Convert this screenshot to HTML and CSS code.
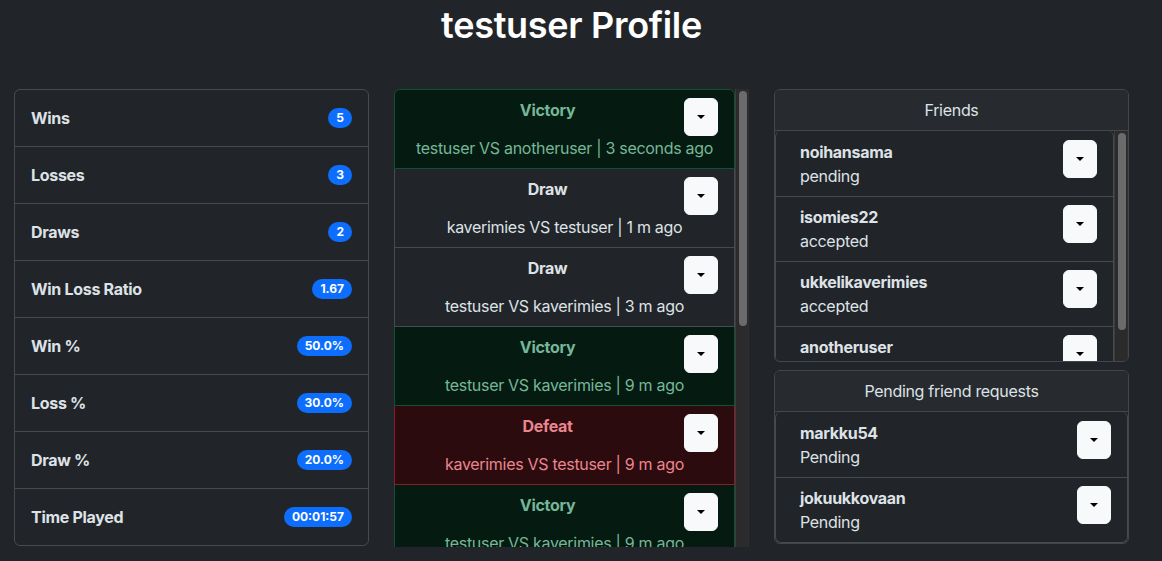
FILE: index.html
```html
<!DOCTYPE html>
<html lang="en">
<head>
<meta charset="utf-8">
<title>testuser Profile</title>
<link rel="stylesheet" href="styles.css">
</head>
<body>
<div class="page">
  <h1 class="title">testuser Profile</h1>
  <div class="columns">
    <ul class="stats">
      <li class="stat"><span>Wins</span><span class="badge">5</span></li>
      <li class="stat"><span>Losses</span><span class="badge">3</span></li>
      <li class="stat"><span>Draws</span><span class="badge">2</span></li>
      <li class="stat"><span>Win Loss Ratio</span><span class="badge">1.67</span></li>
      <li class="stat"><span>Win %</span><span class="badge">50.0%</span></li>
      <li class="stat"><span>Loss %</span><span class="badge">30.0%</span></li>
      <li class="stat"><span>Draw %</span><span class="badge">20.0%</span></li>
      <li class="stat"><span>Time Played</span><span class="badge">00:01:57</span></li>
    </ul>

    <div class="games">
      <div class="games-viewport">
        <ul class="game-list">
          <li class="game game-win"><div class="game-head"><div class="game-result">Victory</div><button class="toggle" type="button"></button></div><div class="game-meta">testuser VS anotheruser | 3 seconds ago</div></li>
          <li class="game"><div class="game-head"><div class="game-result">Draw</div><button class="toggle" type="button"></button></div><div class="game-meta">kaverimies VS testuser | 1 m ago</div></li>
          <li class="game"><div class="game-head"><div class="game-result">Draw</div><button class="toggle" type="button"></button></div><div class="game-meta">testuser VS kaverimies | 3 m ago</div></li>
          <li class="game game-win"><div class="game-head"><div class="game-result">Victory</div><button class="toggle" type="button"></button></div><div class="game-meta">testuser VS kaverimies | 9 m ago</div></li>
          <li class="game game-loss"><div class="game-head"><div class="game-result">Defeat</div><button class="toggle" type="button"></button></div><div class="game-meta">kaverimies VS testuser | 9 m ago</div></li>
          <li class="game game-win"><div class="game-head"><div class="game-result">Victory</div><button class="toggle" type="button"></button></div><div class="game-meta">testuser VS kaverimies | 9 m ago</div></li>
          <li class="game game-loss"><div class="game-head"><div class="game-result">Defeat</div><button class="toggle" type="button"></button></div><div class="game-meta">kaverimies VS testuser | 10 m ago</div></li>
          <li class="game game-win"><div class="game-head"><div class="game-result">Victory</div><button class="toggle" type="button"></button></div><div class="game-meta">testuser VS kaverimies | 11 m ago</div></li>
          <li class="game game-loss"><div class="game-head"><div class="game-result">Defeat</div><button class="toggle" type="button"></button></div><div class="game-meta">kaverimies VS testuser | 12 m ago</div></li>
          <li class="game game-win"><div class="game-head"><div class="game-result">Victory</div><button class="toggle" type="button"></button></div><div class="game-meta">testuser VS kaverimies | 13 m ago</div></li>
        </ul>
      </div>
      <div class="scrollbar"><div class="thumb thumb-games"></div></div>
    </div>

    <div class="side">
      <section class="card">
        <div class="card-header">Friends</div>
        <div class="friends">
          <div class="friends-viewport">
            <ul class="people">
              <li class="person"><div class="person-text"><div class="person-name">noihansama</div><div>pending</div></div><button class="toggle" type="button"></button></li>
              <li class="person"><div class="person-text"><div class="person-name">isomies22</div><div>accepted</div></div><button class="toggle" type="button"></button></li>
              <li class="person"><div class="person-text"><div class="person-name">ukkelikaverimies</div><div>accepted</div></div><button class="toggle" type="button"></button></li>
              <li class="person"><div class="person-text"><div class="person-name">anotheruser</div><div>accepted</div></div><button class="toggle" type="button"></button></li>
            </ul>
          </div>
          <div class="scrollbar"><div class="thumb thumb-friends"></div></div>
        </div>
      </section>
      <section class="card">
        <div class="card-header">Pending friend requests</div>
        <ul class="people">
          <li class="person"><div class="person-text"><div class="person-name">markku54</div><div>Pending</div></div><button class="toggle" type="button"></button></li>
          <li class="person"><div class="person-text"><div class="person-name">jokuukkovaan</div><div>Pending</div></div><button class="toggle" type="button"></button></li>
        </ul>
      </section>
    </div>
  </div>
</div>
</body>
</html>
```

FILE: styles.css
```css
* { box-sizing: border-box; }

body {
  margin: 0;
  background: #212529;
  color: #dee2e6;
  font-family: Inter, "Noto Sans", "Liberation Sans", sans-serif;
  font-size: 16px;
  line-height: 24px;
  letter-spacing: -0.3px;
}

.page {
  width: 1143px;
  padding: 0 14px;
}

.title {
  margin: 0 0 40px;
  padding-top: 1px;
  font-size: 36px;
  line-height: 48px;
  font-weight: 600;
  letter-spacing: -0.3px;
  text-align: center;
  color: #ffffff;
}

.columns {
  display: grid;
  grid-template-columns: repeat(3, 355px);
  gap: 25px;
  align-items: start;
}

/* stats */
.stats {
  list-style: none;
  margin: 0;
  padding: 0;
  border: 1px solid #464b50;
  border-radius: 6px;
}
.stat {
  display: flex;
  justify-content: space-between;
  align-items: center;
  padding: 16px;
  border-top: 1px solid #464b50;
  font-weight: 700;
}
.stat:first-child { border-top: 0; }

.badge {
  background: #0d6efd;
  color: #fff;
  font-size: 12px;
  font-weight: 700;
  line-height: 1;
  letter-spacing: 0;
  padding: 4px 8px;
  border-radius: 50rem;
}

/* fake scrollbars */
.scrollbar {
  flex: none;
  width: 14px;
  background: #2b2b2b;
  border-left: 1px solid #3c3c3c;
  border-right: 1px solid #303030;
  padding: 2px 2px 0 3px;
}
.thumb {
  width: 8px;
  background: #6b6b6b;
  border-radius: 4px;
}
.thumb-games { height: 235px; }
.thumb-friends { height: 197px; }

/* games */
.games {
  display: flex;
  height: 458px;
}
.games-viewport {
  flex: 1;
  overflow: hidden;
}
.game-list {
  list-style: none;
  margin: 0;
  padding: 0;
}
.game {
  padding: 8px 16px;
  border: 1px solid #464b50;
  background: #212529;
}
.game + .game { border-top-width: 0; }
.game:first-child { border-radius: 6px 6px 0 0; }
.game-head {
  display: flex;
  align-items: flex-start;
}
.game-result {
  flex: 1;
  text-align: center;
  font-weight: 700;
}
.game-meta {
  text-align: center;
  white-space: nowrap;
}
.game-win {
  background: #051b11;
  color: #75b798;
  border-color: #0f5132;
}
.game-loss {
  background: #2c0b0e;
  color: #ea868f;
  border-color: #842029;
}

.toggle {
  flex: none;
  width: 34px;
  height: 38px;
  padding: 0;
  background: #f8f9fa;
  border: 1px solid #f8f9fa;
  border-radius: 6px;
  display: flex;
  align-items: center;
  justify-content: center;
}
.toggle::after {
  content: "";
  border-top: 4px solid #000;
  border-left: 4px solid transparent;
  border-right: 4px solid transparent;
}

/* right side */
.side {
  display: flex;
  flex-direction: column;
  gap: 8px;
}
.card {
  border: 1px solid #43474b;
  border-radius: 6px;
  overflow: hidden;
}
.card-header {
  padding: 8px 16px;
  text-align: center;
  background: #272b2f;
  border-bottom: 1px solid #43474b;
}
.friends {
  display: flex;
  height: 230px;
}
.friends-viewport {
  flex: 1;
  overflow: hidden;
}
.people {
  list-style: none;
  margin: 0;
  padding: 0;
  border: 1px solid #464b50;
  border-top: 0;
  border-radius: 6px;
}
.person {
  display: flex;
  justify-content: space-between;
  align-items: flex-start;
  padding: 8px 16px;
  border-top: 1px solid #464b50;
}
.person:first-child { border-top: 0; padding-top: 9px; }
.person-text { margin-left: 8px; }
.person-name { font-weight: 700; }
```
